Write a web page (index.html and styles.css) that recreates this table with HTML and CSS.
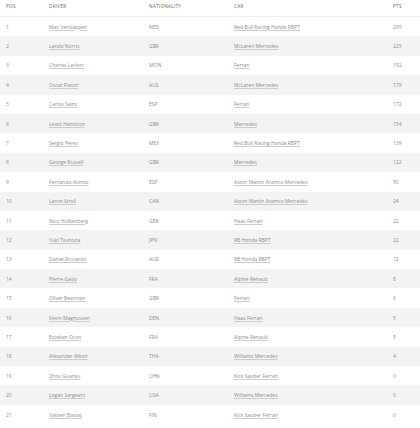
FILE: index.html
```html
<!DOCTYPE html>
<html>
<head>
<meta charset="utf-8">
<link rel="stylesheet" href="styles.css">
</head>
<body>
<div class="standings">
  <div class="row head">
    <div class="c pos">POS</div><div class="c drv">DRIVER</div><div class="c nat">NATIONALITY</div><div class="c car">CAR</div><div class="c pts">PTS</div>
  </div>
  <div class="row"><div class="c pos">1</div><div class="c drv"><a>Max Verstappen</a></div><div class="c nat">NED</div><div class="c car"><a>Red Bull Racing Honda RBPT</a></div><div class="c pts">295</div></div>
  <div class="row"><div class="c pos">2</div><div class="c drv"><a>Lando Norris</a></div><div class="c nat">GBR</div><div class="c car"><a>McLaren Mercedes</a></div><div class="c pts">225</div></div>
  <div class="row"><div class="c pos">3</div><div class="c drv"><a>Charles Leclerc</a></div><div class="c nat">MON</div><div class="c car"><a>Ferrari</a></div><div class="c pts">192</div></div>
  <div class="row"><div class="c pos">4</div><div class="c drv"><a>Oscar Piastri</a></div><div class="c nat">AUS</div><div class="c car"><a>McLaren Mercedes</a></div><div class="c pts">179</div></div>
  <div class="row"><div class="c pos">5</div><div class="c drv"><a>Carlos Sainz</a></div><div class="c nat">ESP</div><div class="c car"><a>Ferrari</a></div><div class="c pts">172</div></div>
  <div class="row"><div class="c pos">6</div><div class="c drv"><a>Lewis Hamilton</a></div><div class="c nat">GBR</div><div class="c car"><a>Mercedes</a></div><div class="c pts">154</div></div>
  <div class="row"><div class="c pos">7</div><div class="c drv"><a>Sergio Perez</a></div><div class="c nat">MEX</div><div class="c car"><a>Red Bull Racing Honda RBPT</a></div><div class="c pts">139</div></div>
  <div class="row"><div class="c pos">8</div><div class="c drv"><a>George Russell</a></div><div class="c nat">GBR</div><div class="c car"><a>Mercedes</a></div><div class="c pts">122</div></div>
  <div class="row"><div class="c pos">9</div><div class="c drv"><a>Fernando Alonso</a></div><div class="c nat">ESP</div><div class="c car"><a>Aston Martin Aramco Mercedes</a></div><div class="c pts">50</div></div>
  <div class="row"><div class="c pos">10</div><div class="c drv"><a>Lance Stroll</a></div><div class="c nat">CAN</div><div class="c car"><a>Aston Martin Aramco Mercedes</a></div><div class="c pts">24</div></div>
  <div class="row"><div class="c pos">11</div><div class="c drv"><a>Nico Hulkenberg</a></div><div class="c nat">GER</div><div class="c car"><a>Haas Ferrari</a></div><div class="c pts">22</div></div>
  <div class="row"><div class="c pos">12</div><div class="c drv"><a>Yuki Tsunoda</a></div><div class="c nat">JPN</div><div class="c car"><a>RB Honda RBPT</a></div><div class="c pts">22</div></div>
  <div class="row"><div class="c pos">13</div><div class="c drv"><a>Daniel Ricciardo</a></div><div class="c nat">AUS</div><div class="c car"><a>RB Honda RBPT</a></div><div class="c pts">12</div></div>
  <div class="row"><div class="c pos">14</div><div class="c drv"><a>Pierre Gasly</a></div><div class="c nat">FRA</div><div class="c car"><a>Alpine Renault</a></div><div class="c pts">8</div></div>
  <div class="row"><div class="c pos">15</div><div class="c drv"><a>Oliver Bearman</a></div><div class="c nat">GBR</div><div class="c car"><a>Ferrari</a></div><div class="c pts">6</div></div>
  <div class="row"><div class="c pos">16</div><div class="c drv"><a>Kevin Magnussen</a></div><div class="c nat">DEN</div><div class="c car"><a>Haas Ferrari</a></div><div class="c pts">5</div></div>
  <div class="row"><div class="c pos">17</div><div class="c drv"><a>Esteban Ocon</a></div><div class="c nat">FRA</div><div class="c car"><a>Alpine Renault</a></div><div class="c pts">5</div></div>
  <div class="row"><div class="c pos">18</div><div class="c drv"><a>Alexander Albon</a></div><div class="c nat">THA</div><div class="c car"><a>Williams Mercedes</a></div><div class="c pts">4</div></div>
  <div class="row"><div class="c pos">19</div><div class="c drv"><a>Zhou Guanyu</a></div><div class="c nat">CHN</div><div class="c car"><a>Kick Sauber Ferrari</a></div><div class="c pts">0</div></div>
  <div class="row"><div class="c pos">20</div><div class="c drv"><a>Logan Sargeant</a></div><div class="c nat">USA</div><div class="c car"><a>Williams Mercedes</a></div><div class="c pts">0</div></div>
  <div class="row"><div class="c pos">21</div><div class="c drv"><a>Valtteri Bottas</a></div><div class="c nat">FIN</div><div class="c car"><a>Kick Sauber Ferrari</a></div><div class="c pts">0</div></div>
</div>
</body>
</html>
```
FILE: styles.css
```css
html, body {
  margin: 0;
  padding: 0;
  background: #ffffff;
}
body {
  font-family: "Open Sans", "Liberation Sans", sans-serif;
  font-size: 5px;
  color: #8c8c8c;
}
.standings {
  display: flex;
  flex-direction: column;
}
.row {
  display: grid;
  grid-template-columns: 49px 100px 85px 159px 1fr;
  align-items: center;
  height: 19.4px;
}
.row:nth-child(odd) {
  background: #f3f3f3;
}
.row.head {
  box-sizing: content-box;
  height: 12px;
  padding-top: 3px;
  padding-bottom: 1px;
  border-bottom: 1px solid #efefef;
  background: #ffffff;
  align-items: start;
  font-size: 4.6px;
  letter-spacing: 0.3px;
  color: #666666;
}
.c.pos {
  padding-left: 6px;
}
a {
  color: #8c8c8c;
  text-decoration: underline;
  text-decoration-color: #cccccc;
  text-underline-offset: 1px;
}
```
